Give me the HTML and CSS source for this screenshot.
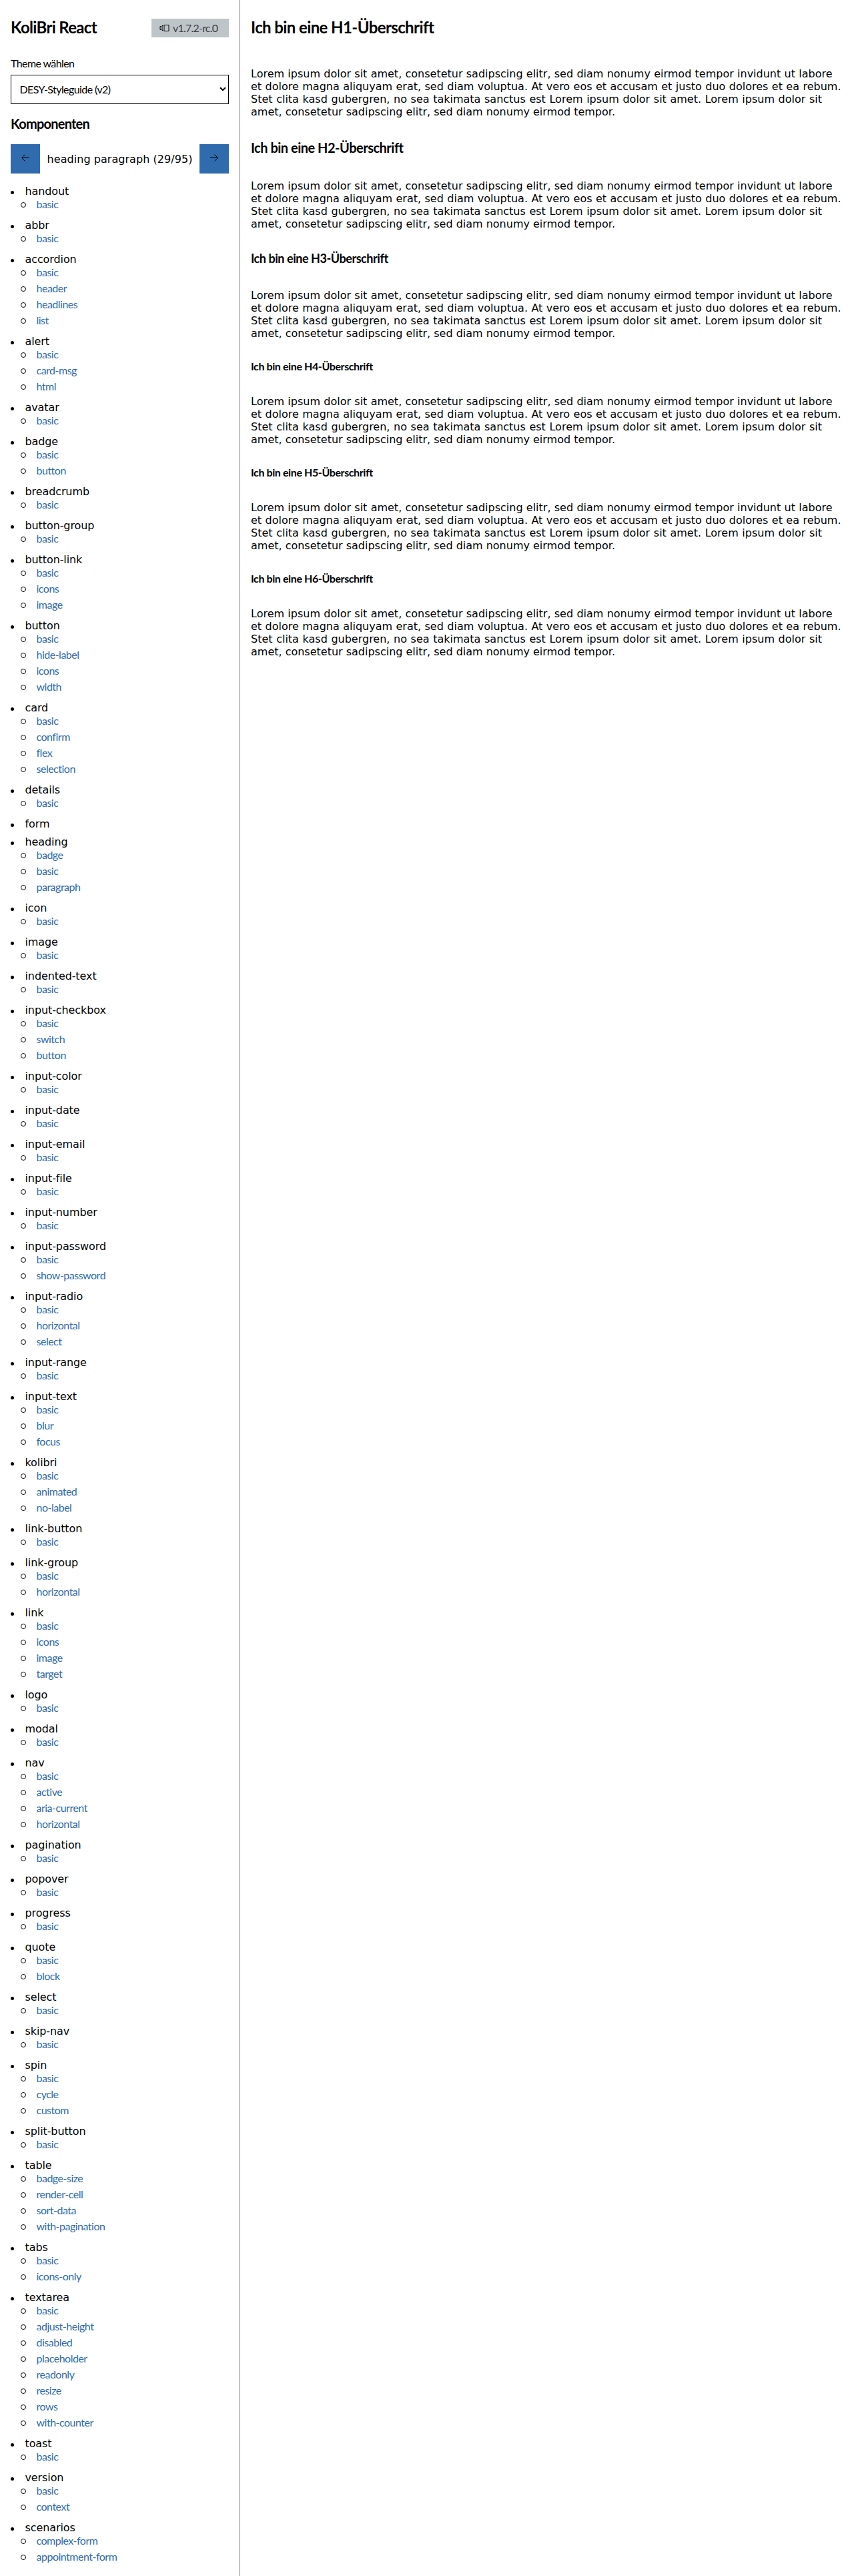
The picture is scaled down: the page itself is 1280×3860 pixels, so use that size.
FILE: index.html
```html
<!DOCTYPE html>
<html lang="de">
<head>
<meta charset="utf-8">
<title>KoliBri React</title>
<link rel="stylesheet" href="styles.css">
</head>
<body>
<div class="layout">
<aside class="sidebar">
  <header class="brand">
    <h1 class="brand-title">KoliBri React</h1>
    <span class="version">
      <svg class="version-icon" width="15" height="12" viewBox="0 0 15 12" fill="none" stroke="#000"><path d="M6.5 1.5h7v9h-7zM5 2.5H3.500v7H5M2 3.500H.5v5H2"/></svg>
      <span>v1.7.2-rc.0</span>
    </span>
  </header>
  <label class="theme-label">Theme wählen</label>
  <div class="select"><span>DESY-Styleguide (v2)</span>
    <svg width="10" height="7" viewBox="0 0 10 7" fill="none" stroke="#000" stroke-width="2"><path d="M1 1.200l4 3.800 4-3.800"/></svg>
  </div>
  <h2 class="section-title">Komponenten</h2>
  <div class="pager">
    <button class="pager-btn"><svg width="14" height="12" viewBox="0 0 14 12" fill="none" stroke="#000"><path d="M13 6.500H1.500M6.500 1.500l-5 5 5 5"/></svg></button>
    <span class="pager-text">heading paragraph (29/95)</span>
    <button class="pager-btn"><svg width="14" height="12" viewBox="0 0 14 12" fill="none" stroke="#000"><path d="M1 6.500h11.500M7.500 1.500l5 5-5 5"/></svg></button>
  </div>
  <ul class="groups">
    <li><b>handout</b><ul><li>basic</li></ul></li>
    <li><b>abbr</b><ul><li>basic</li></ul></li>
    <li><b>accordion</b><ul><li>basic</li><li>header</li><li>headlines</li><li>list</li></ul></li>
    <li><b>alert</b><ul><li>basic</li><li>card-msg</li><li>html</li></ul></li>
    <li><b>avatar</b><ul><li>basic</li></ul></li>
    <li><b>badge</b><ul><li>basic</li><li>button</li></ul></li>
    <li><b>breadcrumb</b><ul><li>basic</li></ul></li>
    <li><b>button-group</b><ul><li>basic</li></ul></li>
    <li><b>button-link</b><ul><li>basic</li><li>icons</li><li>image</li></ul></li>
    <li><b>button</b><ul><li>basic</li><li>hide-label</li><li>icons</li><li>width</li></ul></li>
    <li><b>card</b><ul><li>basic</li><li>confirm</li><li>flex</li><li>selection</li></ul></li>
    <li><b>details</b><ul><li>basic</li></ul></li>
    <li><b>form</b></li>
    <li><b>heading</b><ul><li>badge</li><li>basic</li><li>paragraph</li></ul></li>
    <li><b>icon</b><ul><li>basic</li></ul></li>
    <li><b>image</b><ul><li>basic</li></ul></li>
    <li><b>indented-text</b><ul><li>basic</li></ul></li>
    <li><b>input-checkbox</b><ul><li>basic</li><li>switch</li><li>button</li></ul></li>
    <li><b>input-color</b><ul><li>basic</li></ul></li>
    <li><b>input-date</b><ul><li>basic</li></ul></li>
    <li><b>input-email</b><ul><li>basic</li></ul></li>
    <li><b>input-file</b><ul><li>basic</li></ul></li>
    <li><b>input-number</b><ul><li>basic</li></ul></li>
    <li><b>input-password</b><ul><li>basic</li><li>show-password</li></ul></li>
    <li><b>input-radio</b><ul><li>basic</li><li>horizontal</li><li>select</li></ul></li>
    <li><b>input-range</b><ul><li>basic</li></ul></li>
    <li><b>input-text</b><ul><li>basic</li><li>blur</li><li>focus</li></ul></li>
    <li><b>kolibri</b><ul><li>basic</li><li>animated</li><li>no-label</li></ul></li>
    <li><b>link-button</b><ul><li>basic</li></ul></li>
    <li><b>link-group</b><ul><li>basic</li><li>horizontal</li></ul></li>
    <li><b>link</b><ul><li>basic</li><li>icons</li><li>image</li><li>target</li></ul></li>
    <li><b>logo</b><ul><li>basic</li></ul></li>
    <li><b>modal</b><ul><li>basic</li></ul></li>
    <li><b>nav</b><ul><li>basic</li><li>active</li><li>aria-current</li><li>horizontal</li></ul></li>
    <li><b>pagination</b><ul><li>basic</li></ul></li>
    <li><b>popover</b><ul><li>basic</li></ul></li>
    <li><b>progress</b><ul><li>basic</li></ul></li>
    <li><b>quote</b><ul><li>basic</li><li>block</li></ul></li>
    <li><b>select</b><ul><li>basic</li></ul></li>
    <li><b>skip-nav</b><ul><li>basic</li></ul></li>
    <li><b>spin</b><ul><li>basic</li><li>cycle</li><li>custom</li></ul></li>
    <li><b>split-button</b><ul><li>basic</li></ul></li>
    <li><b>table</b><ul><li>badge-size</li><li>render-cell</li><li>sort-data</li><li>with-pagination</li></ul></li>
    <li><b>tabs</b><ul><li>basic</li><li>icons-only</li></ul></li>
    <li><b>textarea</b><ul><li>basic</li><li>adjust-height</li><li>disabled</li><li>placeholder</li><li>readonly</li><li>resize</li><li>rows</li><li>with-counter</li></ul></li>
    <li><b>toast</b><ul><li>basic</li></ul></li>
    <li><b>version</b><ul><li>basic</li><li>context</li></ul></li>
    <li><b>scenarios</b><ul><li>complex-form</li><li>appointment-form</li></ul></li>
  </ul>
</aside>
<main class="content">
  <h1 class="h h1">Ich bin eine H1-Überschrift</h1>
  <p><span>Lorem ipsum dolor sit amet, consetetur sadipscing elitr, sed diam nonumy eirmod tempor invidunt ut labore</span><span>et dolore magna aliquyam erat, sed diam voluptua. At vero eos et accusam et justo duo dolores et ea rebum.</span><span>Stet clita kasd gubergren, no sea takimata sanctus est Lorem ipsum dolor sit amet. Lorem ipsum dolor sit</span><span>amet, consetetur sadipscing elitr, sed diam nonumy eirmod tempor.</span></p>
  <h2 class="h h2">Ich bin eine H2-Überschrift</h2>
  <p><span>Lorem ipsum dolor sit amet, consetetur sadipscing elitr, sed diam nonumy eirmod tempor invidunt ut labore</span><span>et dolore magna aliquyam erat, sed diam voluptua. At vero eos et accusam et justo duo dolores et ea rebum.</span><span>Stet clita kasd gubergren, no sea takimata sanctus est Lorem ipsum dolor sit amet. Lorem ipsum dolor sit</span><span>amet, consetetur sadipscing elitr, sed diam nonumy eirmod tempor.</span></p>
  <h3 class="h h3">Ich bin eine H3-Überschrift</h3>
  <p><span>Lorem ipsum dolor sit amet, consetetur sadipscing elitr, sed diam nonumy eirmod tempor invidunt ut labore</span><span>et dolore magna aliquyam erat, sed diam voluptua. At vero eos et accusam et justo duo dolores et ea rebum.</span><span>Stet clita kasd gubergren, no sea takimata sanctus est Lorem ipsum dolor sit amet. Lorem ipsum dolor sit</span><span>amet, consetetur sadipscing elitr, sed diam nonumy eirmod tempor.</span></p>
  <h4 class="h h4">Ich bin eine H4-Überschrift</h4>
  <p><span>Lorem ipsum dolor sit amet, consetetur sadipscing elitr, sed diam nonumy eirmod tempor invidunt ut labore</span><span>et dolore magna aliquyam erat, sed diam voluptua. At vero eos et accusam et justo duo dolores et ea rebum.</span><span>Stet clita kasd gubergren, no sea takimata sanctus est Lorem ipsum dolor sit amet. Lorem ipsum dolor sit</span><span>amet, consetetur sadipscing elitr, sed diam nonumy eirmod tempor.</span></p>
  <h5 class="h h4">Ich bin eine H5-Überschrift</h5>
  <p><span>Lorem ipsum dolor sit amet, consetetur sadipscing elitr, sed diam nonumy eirmod tempor invidunt ut labore</span><span>et dolore magna aliquyam erat, sed diam voluptua. At vero eos et accusam et justo duo dolores et ea rebum.</span><span>Stet clita kasd gubergren, no sea takimata sanctus est Lorem ipsum dolor sit amet. Lorem ipsum dolor sit</span><span>amet, consetetur sadipscing elitr, sed diam nonumy eirmod tempor.</span></p>
  <h6 class="h h4">Ich bin eine H6-Überschrift</h6>
  <p><span>Lorem ipsum dolor sit amet, consetetur sadipscing elitr, sed diam nonumy eirmod tempor invidunt ut labore</span><span>et dolore magna aliquyam erat, sed diam voluptua. At vero eos et accusam et justo duo dolores et ea rebum.</span><span>Stet clita kasd gubergren, no sea takimata sanctus est Lorem ipsum dolor sit amet. Lorem ipsum dolor sit</span><span>amet, consetetur sadipscing elitr, sed diam nonumy eirmod tempor.</span></p>
</main>
</div>
</body>
</html>
```
FILE: styles.css
```css
* { box-sizing: border-box; margin: 0; padding: 0; }
body { background: #fff; color: #000; font: 16px/19px Verdana, "DejaVu Sans", sans-serif; }
.layout { display: grid; grid-template-columns: 360px 1fr; min-height: 3860px; }
.sidebar { border-right: 1px solid #808080; padding: 28px 16px 0; }
.brand, .version, .theme-label, .select, .section-title, .groups ul, .h { font-family: Lato, sans-serif; }
.brand { display: flex; justify-content: space-between; height: 28px; }
.brand-title { font-size: 24px; line-height: 26px; letter-spacing: -.68px; }
.version { display: flex; align-items: center; gap: 4px; width: 116px; height: 28px; padding-left: 12px; background: #bec5c9; color: #3b4045; letter-spacing: -.78px; line-height: 28px; }
.version-icon { flex: none; width: 16px; }
.theme-label { display: block; margin-top: 29px; height: 27px; line-height: 20px; letter-spacing: -.6px; }
.select { display: flex; align-items: center; justify-content: space-between; width: 327px; height: 44px; border: 1px solid #000; padding: 0 3px 2px 12.500px; letter-spacing: -.58px; }
.section-title { margin-top: 17px; height: 43px; font-size: 20px; line-height: 24px; letter-spacing: -.77px; }
.pager { display: flex; align-items: center; justify-content: space-between; width: 327px; height: 44px; }
.pager-btn { display: flex; align-items: center; justify-content: center; width: 44px; height: 44px; padding-bottom: 5px; border: 0; background: #306bae; }
.pager-text { padding-top: 1px; letter-spacing: .05px; }
.groups { padding-top: 17px; list-style: none; }
.groups > li { padding-bottom: 10px; }
.groups ul { list-style: none; padding-left: 15px; color: #306bae; letter-spacing: -.5px; }
.groups b { display: flex; align-items: center; gap: 16.500px; height: 17px; padding-top: 2px; line-height: 17px; font-weight: 400; letter-spacing: -.1px; }
.groups b::before { content: ""; width: 5px; height: 5px; margin-top: 3px; border-radius: 50%; background: #000; }
.groups ul li { display: flex; align-items: center; gap: 15.500px; height: 24px; line-height: 24px; }
.groups ul li::before { content: ""; width: 6px; height: 6px; margin-top: 2px; border: 1px solid #000; border-radius: 50%; }
.content { padding: 0 0 0 16px; }
.content p { height: 76px; word-spacing: -1px; }
.content p span { display: block; width: 871.500px; height: 19px; text-align: justify; text-align-last: justify; }
.content p span:nth-child(2) { width: 884.500px; }
.content p span:nth-child(3) { width: 856px; }
.content p span:nth-child(4) { width: 546px; }
.h { letter-spacing: -.025em; line-height: 24px; }
.h1 { height: 101px; padding-top: 29px; font-size: 24px; }
.h2 { height: 92px; padding-top: 32px; font-size: 20px; }
.h3 { height: 88px; padding-top: 30px; font-size: 18px; }
.h4 { height: 83px; padding-top: 28px; font-size: 16px; }
```
